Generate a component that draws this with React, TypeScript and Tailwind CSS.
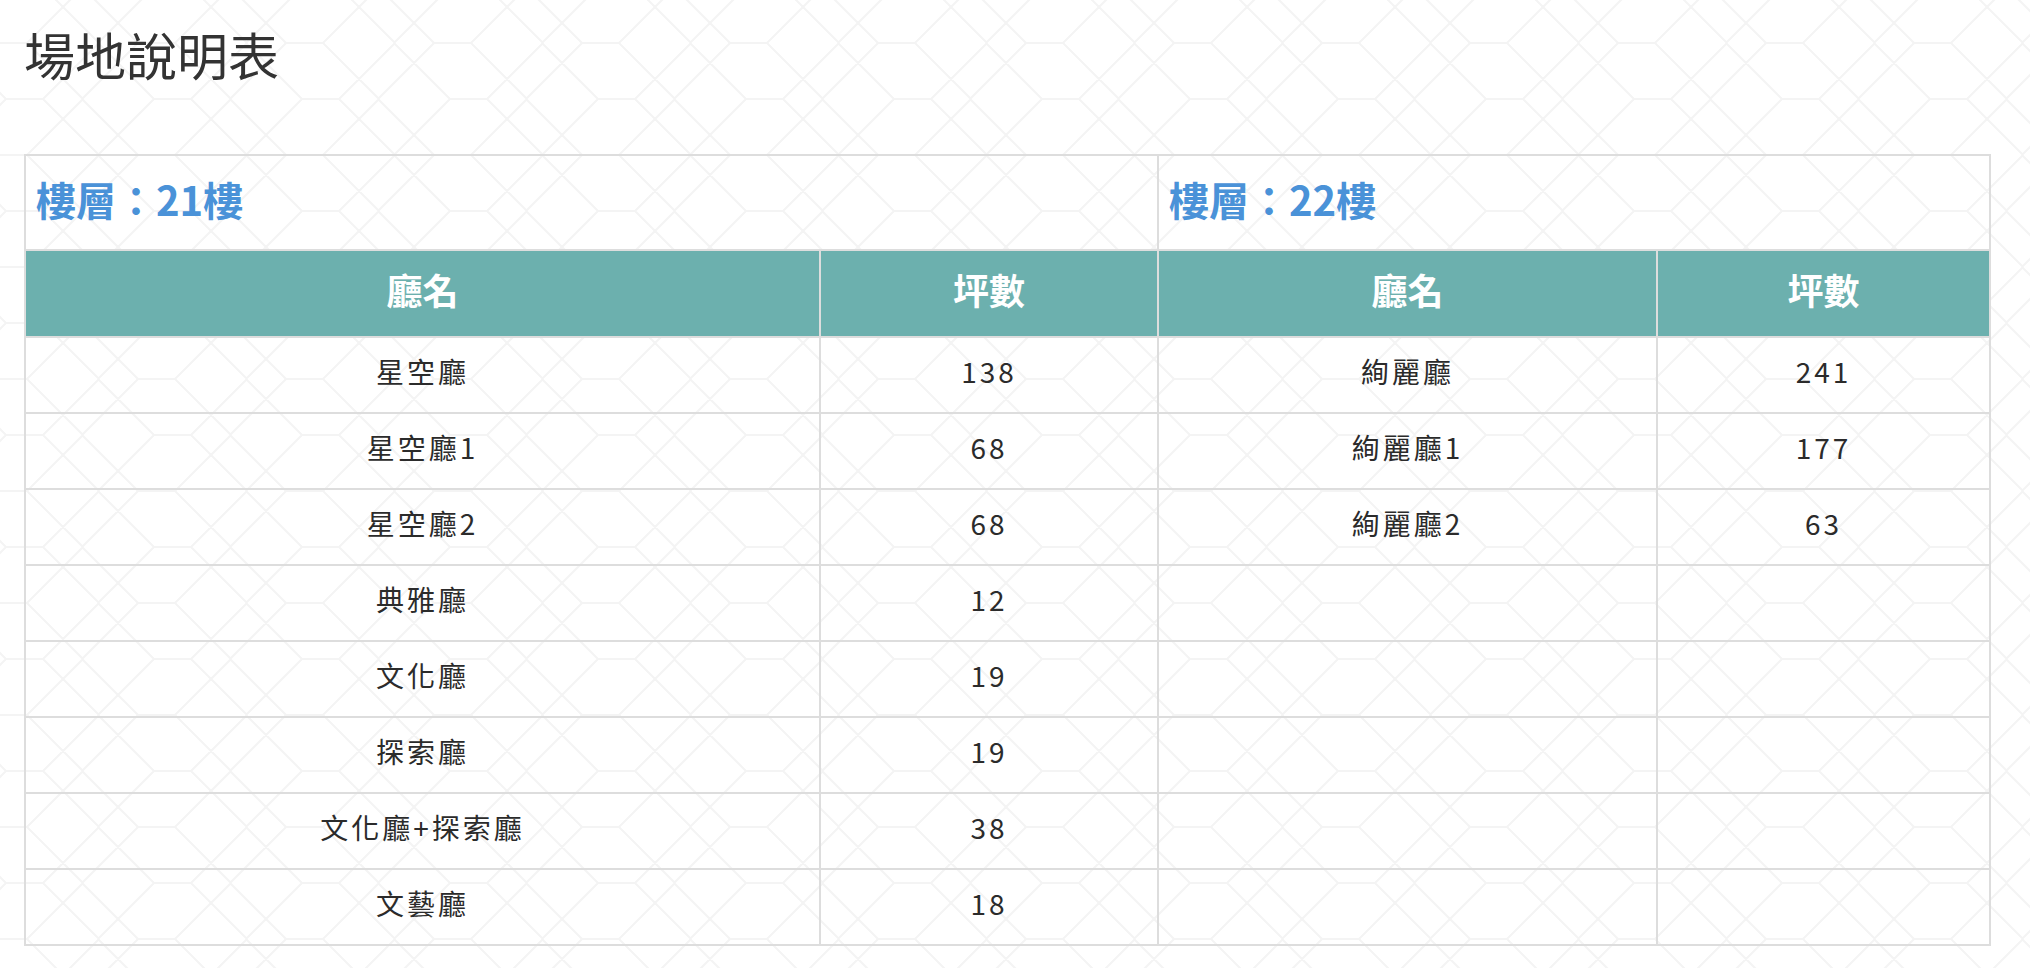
const FONT = '"Noto Sans CJK TC", "Noto Sans", sans-serif';

const left = [
  ["星空廳", "138"],
  ["星空廳1", "68"],
  ["星空廳2", "68"],
  ["典雅廳", "12"],
  ["文化廳", "19"],
  ["探索廳", "19"],
  ["文化廳+探索廳", "38"],
  ["文藝廳", "18"],
];

const right = [
  ["絢麗廳", "241"],
  ["絢麗廳1", "177"],
  ["絢麗廳2", "63"],
];

// faint chevron lattice behind the page
function patternPath() {
  const bases = [
    [0, 0],
    [16, 56],
  ];
  let d = "";
  for (const dx of [-148, 0, 148]) {
    for (const dy of [-112, 0, 112]) {
      for (const [bx, by] of bases) {
        const x = bx + dx;
        const y = by + dy;
        const e = x + 37;
        d += `M${x - 56} ${y - 56}L${x} ${y}L${x - 56} ${y + 56}`;
        d += `M${x} ${y}L${e} ${y}`;
        d += `M${e + 56} ${y - 56}L${e} ${y}L${e + 56} ${y + 56}`;
      }
    }
  }
  return d;
}

function Background() {
  return (
    <svg className="absolute inset-0 h-full w-full" aria-hidden="true">
      <defs>
        <pattern id="lattice" x="138" y="43" width="148" height="112" patternUnits="userSpaceOnUse">
          <path d={patternPath()} fill="none" stroke="#f4f4f4" strokeWidth="2" />
        </pattern>
      </defs>
      <rect width="100%" height="100%" fill="url(#lattice)" />
    </svg>
  );
}

export default function App() {
  const rows = left.map((l, i) => [l, right[i] ?? ["", ""]]);

  return (
    <div className="relative h-[968px] w-full overflow-hidden bg-white" style={{ fontFamily: FONT }}>
      <Background />
      <div className="relative pl-[24px] pt-[16px]">
        <h1 className="text-[51px] font-normal leading-[76px] text-[#333333]">場地說明表</h1>

        <table className="mt-[62px] w-[1967px] table-fixed border-collapse border-2 border-[#dddddd]">
          <colgroup>
            <col className="w-[795px]" />
            <col className="w-[338px]" />
            <col className="w-[499px]" />
            <col className="w-[333px]" />
          </colgroup>
          <tbody>
            <tr className="h-[95px]">
              <td colSpan={2} className="border-2 border-[#dddddd] pb-[8px] pl-[10px] text-left align-middle text-[40px] font-bold text-[#4a92d8]">
                樓層：21樓
              </td>
              <td colSpan={2} className="border-2 border-[#dddddd] pb-[8px] pl-[10px] text-left align-middle text-[40px] font-bold text-[#4a92d8]">
                樓層：22樓
              </td>
            </tr>
            <tr className="h-[87px] bg-[#6cb0ae]">
              {["廳名", "坪數", "廳名", "坪數"].map((h, i) => (
                <th key={i} className="border-2 border-[#dddddd] pb-[10px] text-center align-middle text-[36px] font-bold text-white">
                  {h}
                </th>
              ))}
            </tr>
            {rows.map(([a, b], i) => (
              <tr key={i} className="h-[76px]">
                {[a[0], a[1], b[0], b[1]].map((c, j) => (
                  <td key={j} className="border-2 border-[#dddddd] pb-[8px] text-center align-middle text-[28px] tracking-[3px] text-[#2b2b2b]">
                    {c}
                  </td>
                ))}
              </tr>
            ))}
          </tbody>
        </table>
      </div>
    </div>
  );
}
